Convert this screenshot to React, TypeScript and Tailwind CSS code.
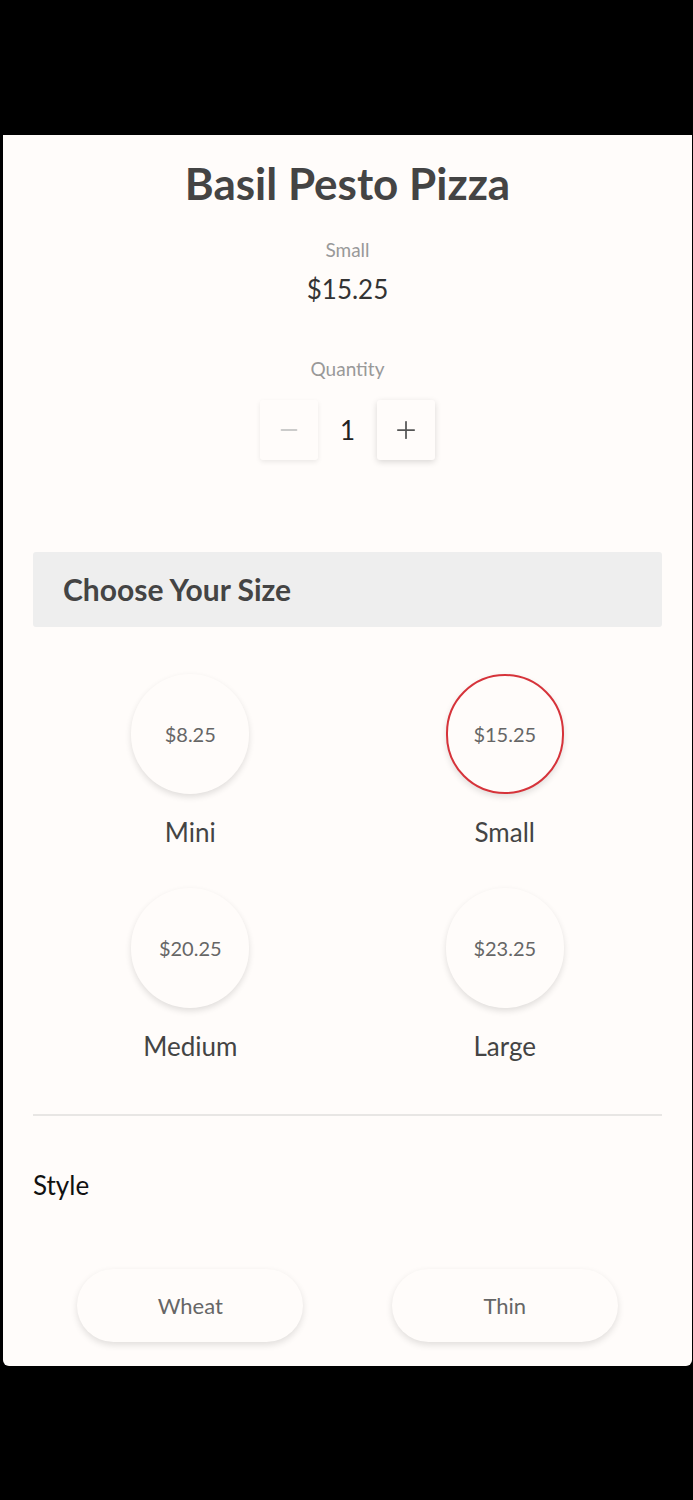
import { Minus, Plus } from "lucide-react";

const sizes = [
  { name: "Mini", price: "$8.25" },
  { name: "Small", price: "$15.25", selected: true },
  { name: "Medium", price: "$20.25" },
  { name: "Large", price: "$23.25" },
];

const styles = ["Wheat", "Thin"];

function SizeOption({ name, price, selected }: { name: string; price: string; selected?: boolean }) {
  return (
    <div className="flex flex-col items-center">
      <div
        className={
          "flex h-[120px] w-[118px] items-center justify-center rounded-full bg-[#fffcfa] text-[20px] text-[#666] shadow-[0_3px_6px_rgba(0,0,0,0.12)] " +
          (selected ? "border-2 border-[#d6333a]" : "")
        }
      >
        {price}
      </div>
      <div className="mt-[20px] text-[26px] leading-[36px] text-[#444]">{name}</div>
    </div>
  );
}

export default function App() {
  return (
    <div className="min-h-[1500px] bg-black pt-[135px] pb-[135px] font-['Lato',sans-serif]">
      <div className="ml-[3px] mr-[1px] rounded-b-[6px] bg-[#fffcfa] pb-[24px]">
        <h1 className="pt-[20px] text-center text-[44px] leading-[56px] font-bold text-[#444]">
          Basil Pesto Pizza
        </h1>
        <div className="mt-[27px] text-center text-[19px] leading-[24px] text-[#999]">Small</div>
        <div className="mt-[10px] text-center text-[26px] leading-[34px] text-[#333]">$15.25</div>
        <div className="mt-[51px] text-center text-[19px] leading-[24px] text-[#999]">Quantity</div>

        <div className="mt-[19px] flex items-center justify-center">
          <button className="flex h-[60px] w-[58px] items-center justify-center rounded-[3px] bg-[#fffcfa] text-[#bbb] shadow-[0_2px_5px_rgba(0,0,0,0.08)]">
            <Minus size={26} strokeWidth={1.5} />
          </button>
          <div className="w-[59px] text-center text-[26px] text-[#222]">1</div>
          <button className="flex h-[60px] w-[58px] items-center justify-center rounded-[3px] bg-[#fffcfa] text-[#555] shadow-[0_2px_6px_rgba(0,0,0,0.15)]">
            <Plus size={28} strokeWidth={1.5} />
          </button>
        </div>

        <div className="mx-[30px] mt-[92px] flex h-[75px] items-center rounded-[3px] bg-[#eeeeee] px-[30px]">
          <h2 className="text-[30px] font-bold text-[#444]">Choose Your Size</h2>
        </div>

        <div className="mx-[30px] mt-[47px] grid grid-cols-2 gap-y-[38px]">
          {sizes.map((s) => (
            <SizeOption key={s.name} {...s} />
          ))}
        </div>

        <div className="mx-[30px] mt-[50px] h-[2px] bg-[#e8e6e4]" />

        <div className="mx-[30px] mt-[52px] text-[26px] leading-[34px] text-[#111]">Style</div>

        <div className="mx-[30px] mt-[67px] grid grid-cols-2">
          {styles.map((s) => (
            <div key={s} className="flex justify-center">
              <button className="h-[73px] w-[226px] rounded-full bg-[#fffcfa] text-[22px] text-[#666] shadow-[0_3px_7px_rgba(0,0,0,0.12)]">
                {s}
              </button>
            </div>
          ))}
        </div>
      </div>
    </div>
  );
}
